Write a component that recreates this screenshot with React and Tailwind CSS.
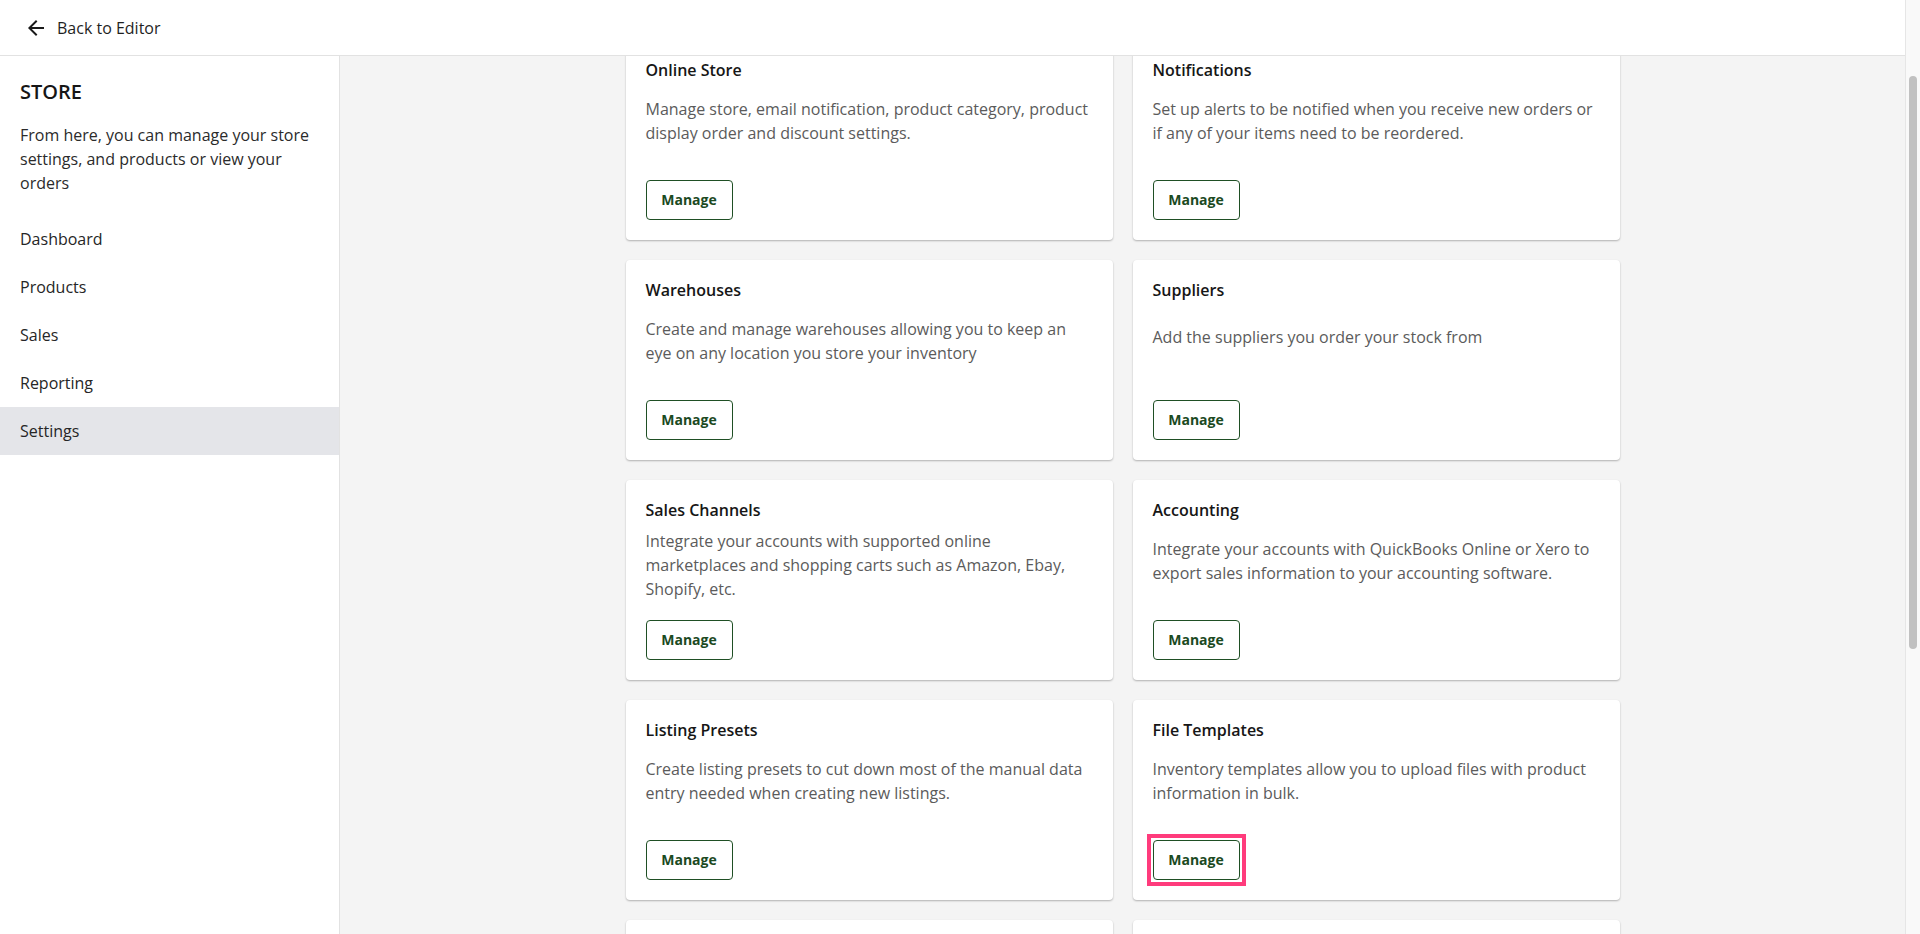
import { useLayoutEffect, useRef } from 'react'

const cards = [
  {
    title: 'Online Store',
    text: 'Manage store, email notification, product category, product display order and discount settings.',
  },
  {
    title: 'Notifications',
    text: 'Set up alerts to be notified when you receive new orders or if any of your items need to be reordered.',
  },
  {
    title: 'Warehouses',
    text: 'Create and manage warehouses allowing you to keep an eye on any location you store your inventory',
  },
  {
    title: 'Suppliers',
    text: 'Add the suppliers you order your stock from',
  },
  {
    title: 'Sales Channels',
    text: 'Integrate your accounts with supported online marketplaces and shopping carts such as Amazon, Ebay, Shopify, etc.',
  },
  {
    title: 'Accounting',
    text: 'Integrate your accounts with QuickBooks Online or Xero to export sales information to your accounting software.',
  },
  {
    title: 'Listing Presets',
    text: 'Create listing presets to cut down most of the manual data entry needed when creating new listings.',
  },
  {
    title: 'File Templates',
    text: 'Inventory templates allow you to upload files with product information in bulk.',
    active: true,
  },
  {
    title: 'Shipping',
    text: 'Set up shipping rates and carriers for your orders.',
  },
  {
    title: 'Taxes',
    text: 'Configure tax rates for the regions you sell in.',
  },
]

const menu = ['Dashboard', 'Products', 'Sales', 'Reporting', 'Settings']

function BackArrow() {
  return (
    <svg width="24" height="24" viewBox="0 0 24 24" fill="#1a1a1a">
      <path d="M20 11H7.83l5.59-5.59L12 4l-8 8 8 8 1.41-1.41L7.83 13H20v-2z" />
    </svg>
  )
}

function SettingCard({ title, text, active }) {
  return (
    <div className="h-[200px] bg-white rounded-[4px] shadow-[0_1px_2px_rgba(0,0,0,0.28)] p-5 flex flex-col">
      <h3 className="text-base leading-5 font-semibold text-[#161616]">{title}</h3>
      <div className="flex-[1]" />
      <p className="text-base leading-6 text-[#5b5b5b]">{text}</p>
      <div className="flex-[2]" />
      <div>
        <span className="relative inline-block">
          <button className="block h-10 w-[87px] rounded-[4px] border border-[#1f4f24] bg-white text-sm font-bold text-[#1b4a1f]">
            Manage
          </button>
          {active && (
            <span className="pointer-events-none absolute -inset-[6px] border-4 border-[#ff3b7c]" />
          )}
        </span>
      </div>
    </div>
  )
}

export default function App() {
  const scroller = useRef(null)

  useLayoutEffect(() => {
    if (scroller.current) scroller.current.scrollTop = 124
  }, [])

  return (
    <div
      className="h-screen flex bg-[#f4f4f4] text-[#1f1f1f]"
      style={{ fontFamily: '"Open Sans", "Noto Sans", sans-serif' }}
    >
      <div ref={scroller} className="flex-1 overflow-hidden">
        <header className="sticky top-0 z-10 h-14 bg-white border-b border-[#e2e2e2] flex items-center pl-6">
          <BackArrow />
          <span className="ml-[9px] text-base text-[#1f1f1f]">Back to Editor</span>
        </header>

        <div className="flex">
          <aside className="sticky top-14 h-[878px] w-[340px] shrink-0 bg-white border-r border-[#e2e2e2] pt-[22px]">
            <div className="px-5">
              <h1 className="text-xl leading-7 font-semibold text-[#161616]">STORE</h1>
              <p className="mt-[17px] text-base leading-6 text-[#2b2b2b]">
                From here, you can manage your store settings, and products or view your orders
              </p>
            </div>
            <nav className="mt-5">
              {menu.map((item) => (
                <div
                  key={item}
                  className={
                    'h-12 px-5 flex items-center text-base text-[#262626] ' +
                    (item === 'Settings' ? 'bg-[#e4e5e9]' : '')
                  }
                >
                  {item}
                </div>
              ))}
            </nav>
          </aside>

          <main className="flex-1 flex justify-center pt-[108px] pb-[279px]">
            <div className="w-[994px] grid grid-cols-2 gap-5">
              {cards.map((c) => (
                <SettingCard key={c.title} {...c} />
              ))}
            </div>
          </main>
        </div>
      </div>

      {/* page scrollbar */}
      <div className="w-[15px] shrink-0 bg-[#f9f9f9] border-l border-[#e6e6e6] pt-[76px] flex justify-center">
        <div className="w-2 h-[573px] rounded-full bg-[#c1c1c1]" />
      </div>
    </div>
  )
}
